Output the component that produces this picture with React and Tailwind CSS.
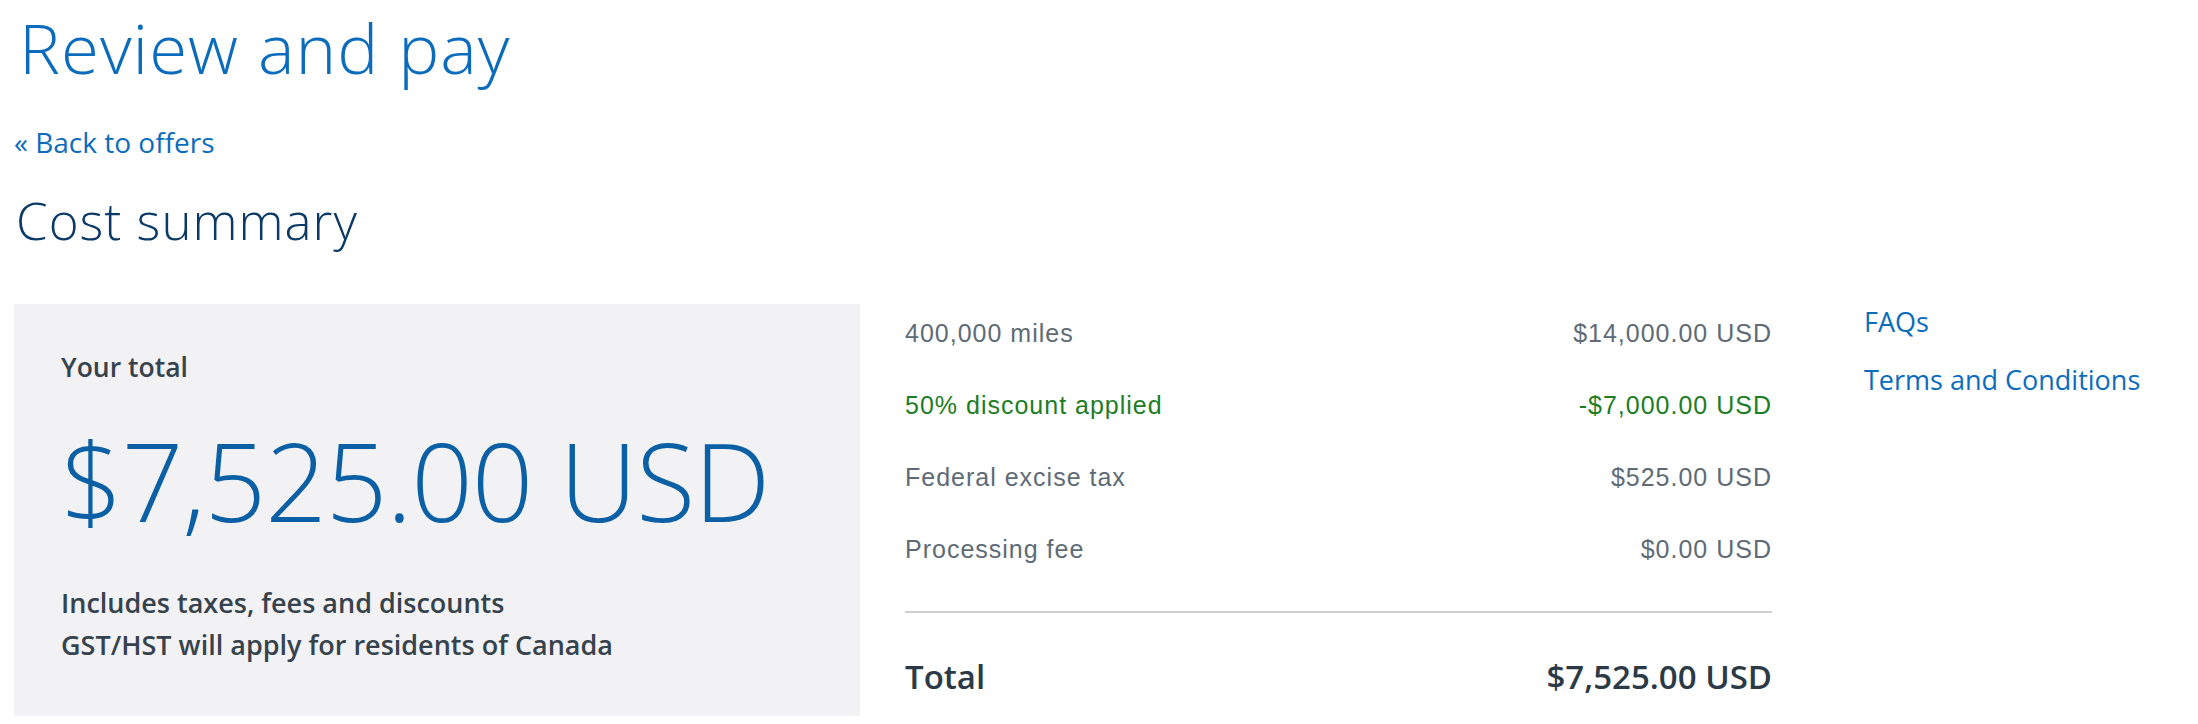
import React from 'react';

const rows = [
  { label: '400,000 miles', amount: '$14,000.00 USD' },
  { label: '50% discount applied', amount: '-$7,000.00 USD', green: true },
  { label: 'Federal excise tax', amount: '$525.00 USD' },
  { label: 'Processing fee', amount: '$0.00 USD' },
];

function SummaryRow({ label, amount, green }) {
  return (
    <div
      className={`flex justify-between text-[25px] leading-[28px] tracking-[1px] ${
        green ? 'text-[#1c7d24]' : 'text-[#5e6b76]'
      }`}
      style={{ fontFamily: '"Liberation Sans", Arial, sans-serif' }}
    >
      <span>{label}</span>
      <span>{amount}</span>
    </div>
  );
}

export default function App() {
  return (
    <div
      className="w-full h-[724px] overflow-hidden bg-white px-[14px]"
      style={{ fontFamily: '"Open Sans", "Noto Sans", sans-serif' }}
    >
      <h1 className="ml-[5px] text-[69px] leading-[94px] font-light tracking-[1px] text-[#0b6cbd]">Review and pay</h1>

      <a href="#" className="mt-[28px] block text-[28px] leading-[40px] text-[#0b6cbd]">
        « Back to offers
      </a>

      <h2 className="mt-[23px] ml-[2px] text-[51px] leading-[70px] font-light tracking-[1px] text-[#0b3a66]">
        Cost summary
      </h2>

      <div className="mt-[49px] flex items-start">
        {/* total panel */}
        <div className="w-[846px] h-[412px] shrink-0 bg-[#f2f2f4] pl-[47px] pt-[45px]">
          <p className="text-[26.5px] leading-[36px] font-semibold text-[#36424c]">Your total</p>
          <p className="mt-[22px] text-[108px] leading-[148px] font-light tracking-[-1px] text-[#0b5fa5]">
            $7,525.00 USD
          </p>
          <div className="mt-[27px] text-[27px] leading-[42px] font-semibold text-[#36424c]">
            <p>Includes taxes, fees and discounts</p>
            <p>GST/HST will apply for residents of Canada</p>
          </div>
        </div>

        {/* breakdown */}
        <div className="ml-[45px] w-[867px] shrink-0 pt-[15px]">
          <div className="flex flex-col gap-[44px]">
            {rows.map(row => (
              <SummaryRow key={row.label} {...row} />
            ))}
          </div>
          <div className="mt-[48px] h-[2px] bg-[#d0d0d0]" />
          <div className="mt-[41px] flex justify-between text-[33px] leading-[46px] font-semibold text-[#2c3a47]">
            <span>Total</span>
            <span>$7,525.00 USD</span>
          </div>
        </div>

        {/* links */}
        <div className="ml-[92px] flex flex-col gap-[22px] text-[27px] leading-[36px] text-[#0b6cbd]">
          <a href="#">FAQs</a>
          <a href="#">Terms and Conditions</a>
        </div>
      </div>
    </div>
  );
}
